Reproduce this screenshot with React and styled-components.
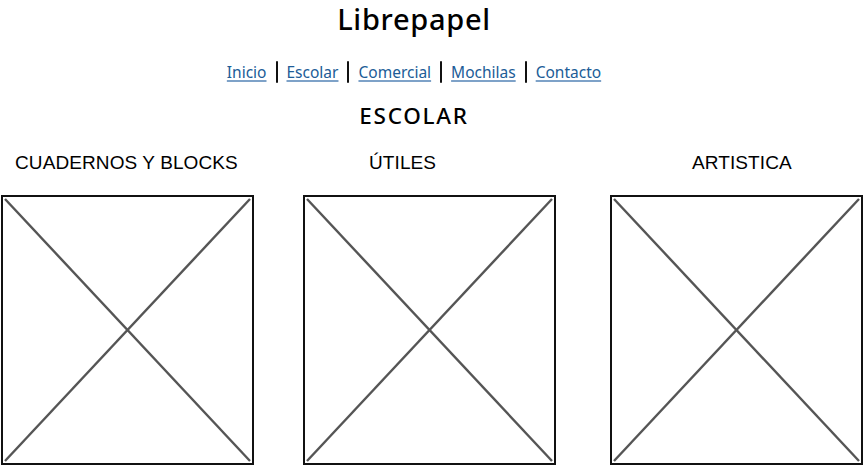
import React from "react";
import styled, { createGlobalStyle } from "styled-components";

const Global = createGlobalStyle`
  html, body { margin: 0; padding: 0; background: #fff; }
  body { width: 863px; height: 466px; overflow: hidden; }
`;

const Page = styled.div`
  display: flex;
  flex-direction: column;
  align-items: stretch;
  font-family: "Noto Sans", "Liberation Sans", sans-serif;
  color: #000;
`;

const Header = styled.header`
  display: flex;
  flex-direction: column;
  align-items: center;
  padding-right: 35px;
`;

const Title = styled.h1`
  margin: 0;
  font-size: 29px;
  font-weight: 500;
  line-height: 38px;
  letter-spacing: 0.7px;
  white-space: nowrap;
`;

const Nav = styled.nav`
  display: flex;
  justify-content: center;
  align-items: center;
  gap: 9px;
  margin-top: 20px;
  height: 28px;
  font-size: 15.5px;
`;

const NavLink = styled.a`
  color: #205c97;
  text-decoration: underline;
  text-decoration-color: #7ea2c8;
  text-underline-offset: 2px;
  text-decoration-thickness: 1.5px;
  cursor: pointer;
`;

const Sep = styled.span`
  display: block;
  width: 2px;
  height: 22px;
  background: #111;
  border-radius: 1px;
`;

const Section = styled.h2`
  margin: 15px 0 0;
  height: 30px;
  font-size: 22.5px;
  font-weight: 500;
  line-height: 30px;
  letter-spacing: 1.7px;
`;

const Grid = styled.div`
  display: flex;
  padding-left: 1px;
  margin-top: 20px;
`;

const Column = styled.div`
  display: flex;
  flex-direction: column;
  width: 253px;
  margin-left: ${(p) => p.$gap}px;
`;

const Label = styled.div`
  font-family: "Liberation Sans", Arial, sans-serif;
  font-size: 19px;
  line-height: 24px;
  height: 24px;
  white-space: nowrap;
  letter-spacing: 0.1px;
  padding-left: ${(p) => p.$offset}px;
`;

const Placeholder = styled.div`
  margin-top: 20px;
  width: 253px;
  height: 270px;
  box-sizing: border-box;
  border: 2px solid #111;
`;

const Cross = styled.svg`
  display: block;
  width: 100%;
  height: 100%;
`;

const ImageBox = () => (
  <Placeholder>
    <Cross viewBox="0 0 249 266" preserveAspectRatio="none">
      <line x1="2" y1="2" x2="247" y2="264" stroke="#555" strokeWidth="2.4" />
      <line x1="247" y1="2" x2="2" y2="264" stroke="#555" strokeWidth="2.4" />
    </Cross>
  </Placeholder>
);

const links = ["Inicio", "Escolar", "Comercial", "Mochilas", "Contacto"];

const cats = [
  { name: "CUADERNOS Y BLOCKS", offset: 14, gap: 0 },
  { name: "ÚTILES", offset: 66, gap: 49 },
  { name: "ARTISTICA", offset: 82, gap: 54 },
];

export default function App() {
  return (
    <>
      <Global />
      <Page>
        <Header>
          <Title>Librepapel</Title>
          <Nav>
            {links.map((l, i) => (
              <React.Fragment key={l}>
                {i > 0 && <Sep />}
                <NavLink>{l}</NavLink>
              </React.Fragment>
            ))}
          </Nav>
          <Section>ESCOLAR</Section>
        </Header>
        <Grid>
          {cats.map((c) => (
            <Column key={c.name} $gap={c.gap}>
              <Label $offset={c.offset}>{c.name}</Label>
              <ImageBox />
            </Column>
          ))}
        </Grid>
      </Page>
    </>
  );
}
